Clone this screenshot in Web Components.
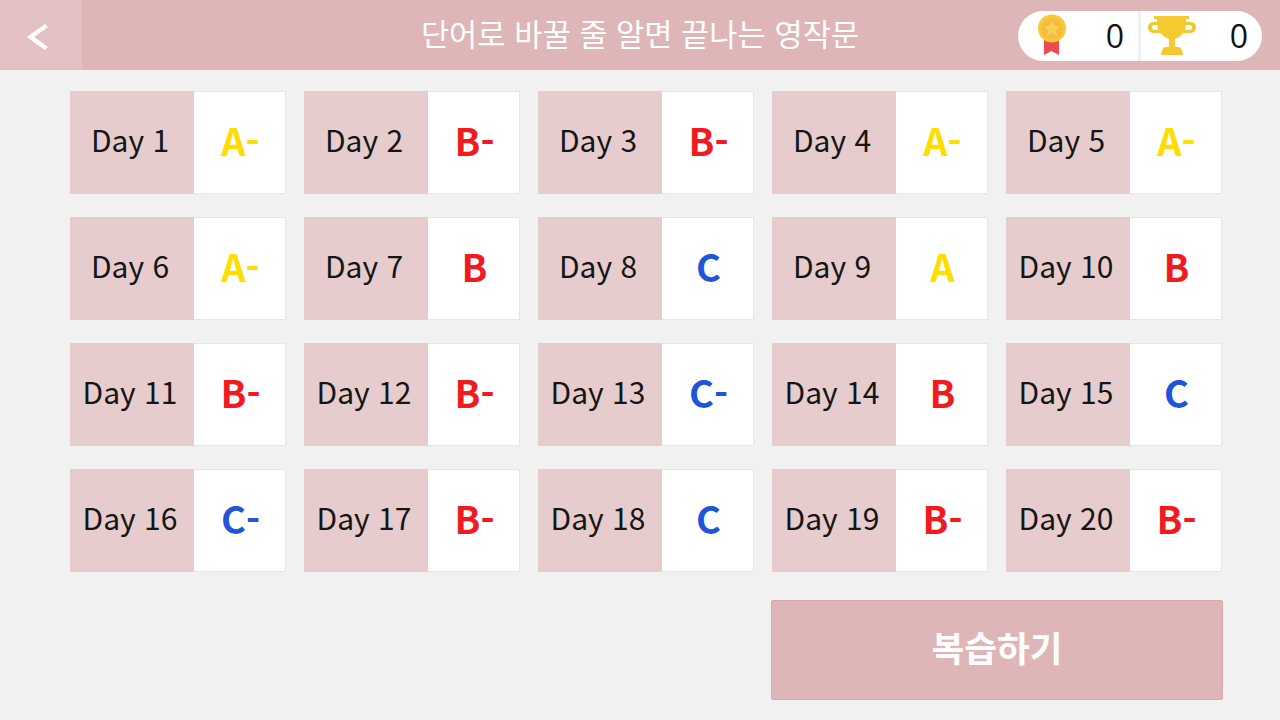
<!DOCTYPE html>
<html lang="ko"><head><meta charset="utf-8"><title>영작문</title>
<style>
html,body{margin:0;padding:0;width:1280px;height:720px;overflow:hidden;background:#f1f1f1;font-family:"Noto Sans CJK KR","Noto Sans",sans-serif}
</style></head><body>
<app-screen></app-screen>
<script>
class AppHeader extends HTMLElement{
  constructor(){super();this.attachShadow({mode:'open'}).innerHTML=`
  <style>
  :host{display:flex;height:70px;background:#deb6b8;box-sizing:border-box;align-items:stretch;position:relative}
  .back{width:82px;background:#e3c0c1;display:flex;align-items:center;justify-content:center;flex:none}
  .back svg{display:block;margin:4px 6px 0 0}
  .title{flex:1;display:flex;align-items:center;justify-content:center;color:#fff;font-size:30.700px;padding:0 82px 5px 0;box-sizing:border-box}
  .pill{position:absolute;left:1018px;top:11px;width:244px;height:50px;border-radius:25px;background:#fff;display:flex;overflow:hidden}
  .cell{position:relative;flex:1;display:flex;align-items:center;justify-content:flex-end;font-family:"Open Sans","Noto Sans",sans-serif;font-size:32px;color:#111;padding:0 14px 2px 0;box-sizing:border-box}
  .cell:first-child{border-right:3px solid #eef0f3;flex:none;width:123px}
  .cell svg{position:absolute;top:0}
  </style>
  <div class="back"><svg width="26" height="32" viewBox="0 0 26 32"><path d="M21.500 4.500 L5.500 16 L21.500 27.500" fill="none" stroke="#fff" stroke-width="4.400"/></svg></div>
  <div class="title"><slot></slot></div>
  <div class="pill">
    <div class="cell"><svg style="left:16px" width="36" height="50" viewBox="0 0 36 50">
      <path d="M10 29 H25 V44 L17.500 40 L10 44Z" fill="#ec4c4f"/>
      <circle cx="18" cy="17.500" r="14" fill="#f8c838"/><circle cx="18" cy="17.500" r="10.500" fill="#f5bd3c"/>
      <path d="M18 9.500 l2.500 5.200 5.500.7-4 3.900 1 5.600-5-2.700-5 2.700 1-5.600-4-3.900 5.500-.7z" fill="#f9cf55"/></svg>0</div>
    <div class="cell"><svg style="left:5px" width="52" height="50" viewBox="0 0 52 50">
      <path d="M13 11 H8 Q2 11 2 16.500 Q2 22 9 22 H16 V19 H9 Q6 19 6 16.500 Q6 14 8.500 14 H13Z M39 11 H44 Q50 11 50 16.500 Q50 22 43 22 H36 V19 H43 Q46 19 46 16.500 Q46 14 43.500 14 H39Z" fill="#f3c832"/>
      <path d="M8 5 H43 V8 H40 V13 Q40 24 29 28 V35 Q29 36 31 37 H21 Q23 36 23 35 V28 Q12 24 11 13 V8 H8Z" fill="#f5c930"/>
      <path d="M19 36 H33 Q36 37 37 44 H15 Q16 37 19 36Z" fill="#f3c832"/></svg>0</div>
  </div>`}
}
customElements.define('app-header',AppHeader);

class DayCard extends HTMLElement{
  constructor(){super();
    const g=this.getAttribute('grade');
    const c=g[0]==='A'?'#ffdd00':g[0]==='B'?'#f01a1f':'#1f55d8';
    this.attachShadow({mode:'open'}).innerHTML=`
    <style>
    :host{display:flex;height:103px;background:#fff}
    .day{width:124px;flex:none;background:#e6cccd;display:flex;align-items:center;justify-content:center;font-size:30px;color:#151515;padding:0 4px 7px 0;box-sizing:border-box;white-space:nowrap}
    .grade{flex:1;display:flex;align-items:center;justify-content:center;font-size:38px;font-weight:700;color:${c};padding:0 0 7px 2px;box-sizing:border-box;border:solid #e6e6e6;border-width:1px 1px 1px 0}
    </style>
    <div class="day"><slot></slot></div><div class="grade">${g}</div>`}
}
customElements.define('day-card',DayCard);

class ReviewButton extends HTMLElement{
  constructor(){super();this.attachShadow({mode:'open'}).innerHTML=`
  <style>
  :host{display:flex;width:452px;height:100px;box-sizing:border-box;background:#deb6b8;border:1px solid #d6a9ac;border-radius:2px;align-items:center;justify-content:center;color:#fff;font-size:35.600px;font-weight:700;padding-bottom:7px}
  </style><slot></slot>`}
}
customElements.define('review-button',ReviewButton);

class AppScreen extends HTMLElement{
  constructor(){super();
    const g=['A-','B-','B-','A-','A-','A-','B','C','A','B','B-','B-','C-','B','C','C-','B-','C','B-','B-'];
    this.attachShadow({mode:'open'}).innerHTML=`
    <style>
    :host{display:block;width:1280px;height:720px;color:#111}
    .main{display:flex;flex-direction:column;padding:21px 57px 0 70px}
    .grid{display:grid;grid-template-columns:repeat(5,216px);column-gap:18px;row-gap:23px}
    .foot{display:flex;justify-content:flex-end;margin-top:28px}
    </style>
    <app-header>단어로 바꿀 줄 알면 끝나는 영작문</app-header>
    <div class="main">
      <div class="grid">${g.map((x,i)=>`<day-card grade="${x}">Day ${i+1}</day-card>`).join('')}</div>
      <div class="foot"><review-button>복습하기</review-button></div>
    </div>`}
}
customElements.define('app-screen',AppScreen);
</script>
</body></html>
